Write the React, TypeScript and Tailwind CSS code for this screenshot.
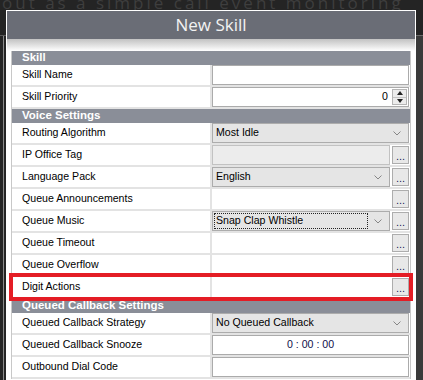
import type { ReactNode } from "react"

type Field =
  | { kind: "header"; label: string }
  | { kind: "text"; label: string }
  | { kind: "spin"; label: string; value: string }
  | { kind: "select"; label: string; value: string; button?: boolean; focus?: boolean }
  | { kind: "locked"; label: string }
  | { kind: "button"; label: string; highlight?: boolean }
  | { kind: "time"; label: string; value: string }

const fields: Field[] = [
  { kind: "header", label: "Skill" },
  { kind: "text", label: "Skill Name" },
  { kind: "spin", label: "Skill Priority", value: "0" },
  { kind: "header", label: "Voice Settings" },
  { kind: "select", label: "Routing Algorithm", value: "Most Idle" },
  { kind: "locked", label: "IP Office Tag" },
  { kind: "select", label: "Language Pack", value: "English", button: true },
  { kind: "button", label: "Queue Announcements" },
  { kind: "select", label: "Queue Music", value: "Snap Clap Whistle", button: true, focus: true },
  { kind: "button", label: "Queue Timeout" },
  { kind: "button", label: "Queue Overflow" },
  { kind: "button", label: "Digit Actions", highlight: true },
  { kind: "header", label: "Queued Callback Settings" },
  { kind: "select", label: "Queued Callback Strategy", value: "No Queued Callback" },
  { kind: "time", label: "Queued Callback Snooze", value: "0 : 00 : 00" },
  { kind: "text", label: "Outbound Dial Code" },
]

function Chevron() {
  return (
    <svg width="8" height="5" viewBox="0 0 8 5" className="shrink-0">
      <polyline points="0.5,0.5 4,4 7.5,0.5" fill="none" stroke="#7a7a7a" strokeWidth="0.9" />
    </svg>
  )
}

function DotsButton() {
  return (
    <div className="w-[17px] h-[18px] shrink-0 border border-[#adadad] bg-[#e8e8e8] flex items-end justify-center pb-[1px] text-[11px] leading-none text-[#1b1b60]">
      ...
    </div>
  )
}

function Select({ value, focus, wide }: { value: string; focus?: boolean; wide?: boolean }) {
  return (
    <div className="flex-1 h-full border border-[#acacac] bg-[#e5e5e5] flex items-center pl-[1px] pr-[7px]">
      <div
        className={
          focus
            ? "flex-1 h-[16px] flex items-center pl-[1px] border border-dotted border-[#222]"
            : "flex-1 flex items-center pl-[2px]"
        }
      >
        {value}
      </div>
      <div className={wide ? "pl-[8px]" : "pl-[6px]"}>
        <Chevron />
      </div>
    </div>
  )
}

function Value({ f }: { f: Field }) {
  let body: ReactNode = null
  if (f.kind === "text") {
    body = <div className="flex-1 h-full border border-[#ababab] bg-white" />
  } else if (f.kind === "spin") {
    body = (
      <div className="flex-1 h-full border border-[#ababab] bg-white flex items-center justify-end pr-[1px]">
        <span className="pr-[4px]">{f.value}</span>
        <div className="w-[15px] h-[16px] flex flex-col border border-[#b5b5b5] bg-[#ececec]">
          <div className="flex-1 flex items-center justify-center border-b border-[#c4c4c4]">
            <div className="w-0 h-0 border-x-[3.5px] border-x-transparent border-b-[4px] border-b-[#222]" />
          </div>
          <div className="flex-1 flex items-center justify-center">
            <div className="w-0 h-0 border-x-[3.5px] border-x-transparent border-t-[4px] border-t-[#222]" />
          </div>
        </div>
      </div>
    )
  } else if (f.kind === "select") {
    body = (
      <>
        <Select value={f.value} focus={f.focus} wide={!f.button} />
        {f.button && <DotsButton />}
      </>
    )
  } else if (f.kind === "locked") {
    body = (
      <>
        <div className="flex-1 h-full border border-[#c2c2c2] bg-[#ececec]" />
        <DotsButton />
      </>
    )
  } else if (f.kind === "button") {
    body = (
      <>
        <div className="flex-1" />
        <DotsButton />
      </>
    )
  } else if (f.kind === "time") {
    body = (
      <div className="flex-1 h-full border border-[#ababab] bg-white flex items-center justify-center text-[#10104a]">
        {f.value}
      </div>
    )
  }
  return <div className="w-[198px] h-[20px] flex items-center gap-[2px] pr-[1px]">{body}</div>
}

function Row({ f }: { f: Field }) {
  if (f.kind === "header") {
    return (
      <div className="h-[14px] bg-[#8a8e98] pl-[10px] flex items-center text-white font-bold text-[11.5px] leading-none">
        {f.label}
      </div>
    )
  }
  const highlight = f.kind === "button" && f.highlight
  return (
    <div className="relative flex h-[22px] border-b-2 border-[#e3e3e3]">
      <div className="w-[200px] h-[20px] flex items-center pl-[10px] border-r-2 border-[#e3e3e3]">
        {f.label}
      </div>
      <Value f={f} />
      {highlight && (
        <div className="absolute -top-[4px] -bottom-[4px] -left-[3px] -right-[3px] border-4 border-[#e41d25] z-10" />
      )}
    </div>
  )
}

export default function App() {
  return (
    <div className="w-[423px] h-[380px] overflow-hidden bg-[#242424] flex flex-col font-['Liberation_Sans',Arial,sans-serif] text-[10.6px] text-black">
      <div className="h-[10px] overflow-hidden">
        <p className="-mt-[10px] pl-[2px] text-[17px] tracking-[3px] text-[#3e3e3e] font-['Open_Sans',sans-serif] whitespace-nowrap">
          out as a simple call event monitoring
        </p>
      </div>
      <div className="flex flex-1 min-h-0">
        <div className="w-[6px] flex flex-col">
          <div className="h-[25px]" />
          <div className="flex-1 border-t border-[#5a5a5a] pl-[3px]">
            <div className="w-[1px] h-full bg-[#8a8a8a]" />
          </div>
        </div>
        <div className="w-[410px] border border-b-0 border-white bg-white flex flex-col">
          <div className="h-[28px] bg-[#6a6d76] flex items-center justify-center font-['Open_Sans',sans-serif] text-[17px] text-[#f2f2f2]">
            New Skill
          </div>
          <div className="h-[12px] bg-linear-to-b from-[#c2c2c2] to-white" />
          <div className="mx-[4px] border-x border-[#c8c8c8]">
            {fields.map((f, i) => (
              <Row key={i} f={f} />
            ))}
          </div>
        </div>
        <div className="flex-1 flex flex-col">
          <div className="h-[25px]" />
          <div className="flex-1 border-t border-[#6a6a6a] bg-[#3a3a3a]" />
        </div>
      </div>
    </div>
  )
}
